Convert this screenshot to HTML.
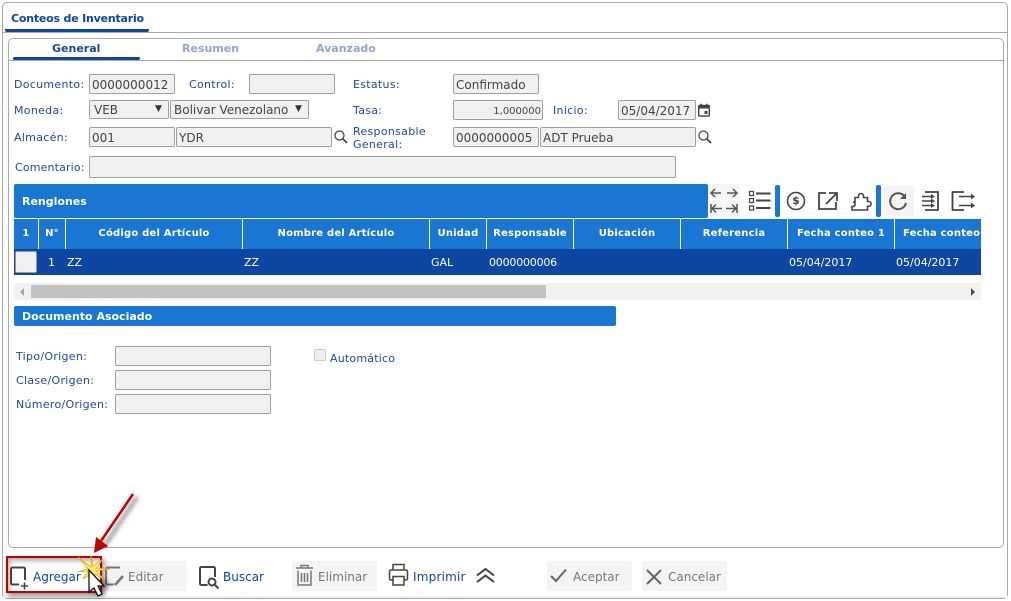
<!DOCTYPE html>
<html><head><meta charset="utf-8"><style>
html,body{margin:0;padding:0;background:#fff}
#p{position:relative;width:1011px;height:601px;overflow:hidden;background:#fff;font-family:"DejaVu Sans",sans-serif;font-size:11px;color:#0d47a1}
#p div{position:absolute;box-sizing:border-box;white-space:nowrap}
.l{line-height:14px;color:#1a4a9c;margin-top:1px;letter-spacing:.3px}
.i{background:#f1f1f1;border:1px solid #a0a0a0;border-radius:2px;font-size:12px;color:#444;line-height:18px;padding-left:2px;padding-top:1px;overflow:hidden}
.b{background:#1976d2;color:#fff;font-weight:bold;font-size:11px}
.h{top:219px;height:30px;line-height:30px;color:#fff;font-weight:bold;font-size:10px;text-align:center;letter-spacing:.2px;overflow:hidden}
.s{top:219px;width:1px;height:30px;background:#fff}
.r{top:250px;height:26px;line-height:26px;color:#fff;font-size:11px}
.g{background:#f4f4f4;border-radius:2px;top:561px;height:30px}
.t{top:570px;line-height:15px;font-size:12px}
.u{color:#777}.v{color:#0d47a1}
svg{position:absolute;overflow:visible}
</style></head><body><div id="p">
<div style="left:2px;top:2px;width:1006px;height:597px;border:1px solid #aaa;border-radius:5px"></div>
<div style="left:3px;top:32px;width:1004px;height:1px;background:#aaa"></div>
<div style="left:5px;top:29px;width:144px;height:3px;background:#0d47a1;border-radius:0 0 2px 2px"></div>
<div style="left:11px;top:12px;font-weight:bold;font-size:11px;line-height:14px;color:#0d47a1;letter-spacing:-.2px">Conteos de Inventario</div>
<div style="left:8px;top:38px;width:996px;height:510px;border:1px solid #aaa;border-radius:5px"></div>
<div style="left:9px;top:60px;width:994px;height:1px;background:#aaa"></div>
<div style="left:13px;top:57px;width:127px;height:3px;background:#0d47a1;border-radius:2px"></div>
<div style="left:52px;top:42px;font-weight:bold;line-height:14px;color:#1a4a8c">General</div>
<div style="left:182px;top:42px;font-weight:bold;line-height:14px;color:#8fa6d2">Resumen</div>
<div style="left:316px;top:42px;font-weight:bold;line-height:14px;color:#8fa6d2">Avanzado</div>

<div class="l" style="left:14px;top:77px">Documento:</div>
<div class="i" style="left:89px;top:74px;width:86px;height:20px">0000000012</div>
<div class="l" style="left:189px;top:77px">Control:</div>
<div class="i" style="left:249px;top:74px;width:86px;height:20px"></div>
<div class="l" style="left:353px;top:77px">Estatus:</div>
<div class="i" style="left:453px;top:74px;width:86px;height:20px">Confirmado</div>

<div class="l" style="left:14px;top:103px">Moneda:</div>
<div class="i" style="left:89px;top:100px;width:80px;height:19px;padding-left:4px;line-height:17px">VEB</div>
<div style="left:155px;top:102px;font-size:9px;line-height:14px;color:#333">▼</div>
<div class="i" style="left:170px;top:100px;width:139px;height:19px;padding-left:3px;line-height:17px">Bolivar Venezolano</div>
<div style="left:295px;top:102px;font-size:9px;line-height:14px;color:#333">▼</div>
<div class="l" style="left:353px;top:103px">Tasa:</div>
<div class="i" style="left:453px;top:100px;width:90px;height:20px;font-size:10px;text-align:right;padding-right:1px;padding-top:2px">1,000000</div>
<div class="l" style="left:553px;top:103px">Inicio:</div>
<div class="i" style="left:618px;top:100px;width:78px;height:20px">05/04/2017</div>
<svg style="left:698px;top:103px" width="12" height="14" viewBox="0 0 12 14"><path d="M1.500 2.500h9a.8.8 0 0 1 .8.8v9a.8.8 0 0 1-.8.8h-9a.8.8 0 0 1-.8-.8v-9a.8.8 0 0 1 .8-.8z" fill="none" stroke="#444" stroke-width="1.400"/><path d="M1 2.500h10v3H1z" fill="#444"/><path d="M3 .8v2M9 .8v2" stroke="#444" stroke-width="1.400"/><rect x="6.500" y="8" width="3" height="3" fill="#444"/></svg>

<div class="l" style="left:14px;top:130px">Almacén:</div>
<div class="i" style="left:89px;top:127px;width:86px;height:20px">001</div>
<div class="i" style="left:176px;top:127px;width:156px;height:20px">YDR</div>
<svg style="left:334px;top:130px" width="14" height="14" viewBox="0 0 14 14"><circle cx="5.500" cy="5.500" r="4.500" fill="none" stroke="#444" stroke-width="1.300"/><path d="M9 9l4 4" stroke="#444" stroke-width="1.800"/></svg>
<div class="l" style="left:353px;top:124px;line-height:13px">Responsable<br>General:</div>
<div class="i" style="left:453px;top:127px;width:86px;height:20px">0000000005</div>
<div class="i" style="left:540px;top:127px;width:156px;height:20px">ADT Prueba</div>
<svg style="left:698px;top:130px" width="14" height="14" viewBox="0 0 14 14"><circle cx="5.500" cy="5.500" r="4.500" fill="none" stroke="#444" stroke-width="1.300"/><path d="M9 9l4 4" stroke="#444" stroke-width="1.800"/></svg>

<div class="l" style="left:15px;top:160px;letter-spacing:.15px">Comentario:</div>
<div class="i" style="left:89px;top:156px;width:587px;height:22px"></div>

<div class="b" style="left:14px;top:184px;width:694px;height:34px;line-height:35px;padding-left:8px;border-radius:2px">Renglones</div>

<div style="left:709px;top:184px;width:31px;height:33px;background:#f6f6f6;border-radius:2px"></div>
<svg style="left:709px;top:184px" width="272" height="34" viewBox="0 0 272 34" fill="none" stroke="#555" stroke-width="1.500">
<path d="M2 9h10M6 5l-4 4 4 4M18 9h10M24 5l4 4-4 4M2 20v9M3 24.500h10M7 20.500l-4 4 4 4M28 20v9M27 24.500H17M23 20.500l4 4-4 4"/>
<path stroke="#444" stroke-width="2" d="M47 9.500h14.500M47 16.500h14.500M47 24h14.500"/>
<path stroke="#444" stroke-width="1.200" d="M40.500 7.500h4v4h-4zM40.500 14.500h4v4h-4zM40.500 22h4v4h-4z"/>
<circle cx="87" cy="17" r="8.500" stroke="#444" stroke-width="1.600"/>
<path stroke="#444" stroke-width="1.800" d="M117 9h-7v16h17v-7M120 9h8v8M128 9l-11 11"/>
<path stroke="#444" stroke-width="1.600" d="M146 18V13.500h3.500V12a2.500 2.500 0 0 1 5 0v1.500h4V17.500h1.200a2.400 2.400 0 0 1 0 4.800h-1.200V26H143v-3.500h1.200a2.300 2.300 0 0 0 0-4.500z"/>
</svg>
<div style="left:785px;top:192px;width:22px;height:18px;line-height:18px;text-align:center;font-size:11px;font-weight:bold;color:#444">$</div>
<div style="left:775px;top:185px;width:5px;height:32px;background:#1976d2;border-radius:2px"></div>
<div style="left:876px;top:185px;width:5px;height:32px;background:#1976d2;border-radius:2px"></div>
<div style="left:884px;top:186px;width:30px;height:30px;background:#f4f4f4;border-radius:2px"></div>
<svg style="left:884px;top:186px" width="96" height="30" viewBox="0 0 96 30" fill="none" stroke="#555" stroke-width="2">
<path d="M21 11a8 8 0 1 0 1 6"/><path d="M22 7v6h-6z" fill="#555" stroke="none"/>
<g stroke="#444" stroke-width="1.800"><path d="M41 6h13v18H41"/><path d="M38 10.500h10M38 15h10M38 19.500h10" stroke-width="1.500"/>
<path d="M80 6H68.500v18H80" stroke-linejoin="round"/><path d="M75 10.500h13M75 19.500h13" stroke-width="1.500"/></g>
<path d="M47 8l4 2.500-4 2.500zM47 12.500l4 2.500-4 2.500zM47 17l4 2.500-4 2.500zM87 7.500l4 3-4 3zM87 16.500l4 3-4 3z" fill="#444" stroke="none"/>
</svg>

<div style="left:14px;top:219px;width:967px;height:30px;background:#1976d2"></div>
<div class="s" style="left:38px"></div><div class="s" style="left:65px"></div><div class="s" style="left:242px"></div><div class="s" style="left:429px"></div><div class="s" style="left:486px"></div><div class="s" style="left:573px"></div><div class="s" style="left:680px"></div><div class="s" style="left:787px"></div><div class="s" style="left:894px"></div>
<div class="h" style="left:14px;width:24px">1</div>
<div class="h" style="left:39px;width:26px">N°</div>
<div class="h" style="left:66px;width:176px">Código del Artículo</div>
<div class="h" style="left:243px;width:186px">Nombre del Artículo</div>
<div class="h" style="left:430px;width:56px">Unidad</div>
<div class="h" style="left:487px;width:86px">Responsable</div>
<div class="h" style="left:574px;width:106px">Ubicación</div>
<div class="h" style="left:681px;width:106px">Referencia</div>
<div class="h" style="left:788px;width:106px">Fecha conteo 1</div>
<div class="h" style="left:895px;width:86px;text-align:left;padding-left:8px">Fecha conteo 2</div>

<div style="left:14px;top:249px;width:967px;height:26px;background:#0d47a1"></div>
<div style="left:15px;top:251px;width:22px;height:22px;background:#f1f1f1;border:1px solid #999;border-radius:2px"></div>
<div class="r" style="left:48px">1</div><div class="r" style="left:67px">ZZ</div><div class="r" style="left:244px">ZZ</div><div class="r" style="left:431px">GAL</div><div class="r" style="left:489px;letter-spacing:-.2px">0000000006</div><div class="r" style="left:789px">05/04/2017</div><div class="r" style="left:896px">05/04/2017</div>

<div style="left:14px;top:283px;width:967px;height:17px;background:#f1f1f1"></div>
<div style="left:31px;top:285px;width:515px;height:13px;background:#c1c1c1"></div>
<div style="left:20px;top:288px;width:0;height:0;border:4px solid transparent;border-left:0;border-right:4px solid #a3a3a3"></div>
<div style="left:971px;top:288px;width:0;height:0;border:4px solid transparent;border-right:0;border-left:4px solid #505050"></div>

<div class="b" style="left:14px;top:306px;width:602px;height:20px;line-height:21px;padding-left:8px;border-radius:2px">Documento Asociado</div>

<div class="l" style="left:16px;top:349px">Tipo/Origen:</div>
<div class="i" style="left:115px;top:346px;width:156px;height:20px"></div>
<div class="l" style="left:16px;top:373px">Clase/Origen:</div>
<div class="i" style="left:115px;top:370px;width:156px;height:20px"></div>
<div class="l" style="left:16px;top:397px">Número/Origen:</div>
<div class="i" style="left:115px;top:394px;width:156px;height:20px"></div>
<div style="left:314px;top:349px;width:12px;height:12px;background:#eee;border:1px solid #ccc;border-radius:2px"></div>
<div class="l" style="left:330px;top:351px;letter-spacing:.2px">Automático</div>

<div style="left:3px;top:596px;width:1004px;height:2px;background:#f2f2f2"></div>
<div class="g" style="left:105px;width:82px"></div>
<div class="g" style="left:292px;width:85px"></div>
<div class="g" style="left:547px;width:85px"></div>
<div class="g" style="left:642px;width:85px"></div>

<div style="left:6px;top:556px;width:96px;height:37px;border:2px solid #c00000;box-shadow:2px 3px 5px rgba(0,0,0,.45),inset 2px 3px 5px rgba(0,0,0,.3)"></div>

<svg style="left:0;top:550px" width="740" height="50" viewBox="0 0 740 50" fill="none" stroke="#444" stroke-width="2">
<path d="M25 30V19a1.500 1.500 0 0 0-1.500-1.500h-11a1.500 1.500 0 0 0-1.500 1.500v14a1.500 1.500 0 0 0 1.500 1.500H19"/><path d="M21 36h7M24.500 32.500v7" stroke-width="1.500"/>
<g stroke="#777"><path d="M120 17.500h-12.500a1.500 1.500 0 0 0-1.500 1.500v14a1.500 1.500 0 0 0 1.500 1.500H114"/><path d="M115 35l8-9" stroke-width="2.500"/></g>
<path d="M215 27V18.500a1.500 1.500 0 0 0-1.500-1.500h-12a1.500 1.500 0 0 0-1.500 1.500v15a1.500 1.500 0 0 0 1.500 1.500h6"/><circle cx="212" cy="32" r="3.500"/><path d="M215 35l3.500 3.500"/>
<g stroke="#777"><path d="M296 18h17M301 18v-2.500h7V18M298 20.500v14.500h13V20.500M301.500 23v9M304.500 23v9M307.500 23v9" stroke-width="1.500"/></g>
<path d="M393 20v-5.500h11V20M393 30h-2a1.500 1.500 0 0 1-1.500-1.500v-7a1.500 1.500 0 0 1 1.500-1.500h15a1.500 1.500 0 0 1 1.500 1.500v7a1.500 1.500 0 0 1-1.500 1.500h-2M393 26.500h11v8.500h-11z" stroke-width="1.500"/>
<path d="M477 25.500l8.500-6.500 8.500 6.500M477 32l8.500-6.500 8.500 6.500" stroke-width="2"/>
<path d="M551 26l5 5 10-11.500" stroke="#666" stroke-width="2"/>
<path d="M647 20l14 14M661 20l-14 14" stroke="#666" stroke-width="2"/>
</svg>

<div class="t v" style="left:33px">Agregar</div>
<div class="t u" style="left:128px">Editar</div>
<div class="t v" style="left:223px">Buscar</div>
<div class="t u" style="left:318px">Eliminar</div>
<div class="t v" style="left:413px;letter-spacing:.2px">Imprimir</div>
<div class="t u" style="left:573px">Aceptar</div>
<div class="t u" style="left:668px">Cancelar</div>

<svg style="left:0;top:480px" width="140" height="121" viewBox="0 0 140 121">
<defs><filter id="f" x="-50%" y="-50%" width="200%" height="200%"><feGaussianBlur stdDeviation="2"/></filter></defs>
<path d="M137 17L103 68" stroke="#000" stroke-opacity=".4" stroke-width="4" fill="none" filter="url(#f)"/>
<path d="M133 14L101 61" stroke="#c00000" stroke-width="2.500" fill="none"/>
<path d="M94 73l14-7-12-9z" fill="#c00000"/>
<path d="M92 111l6 4 5-2 7-8-6-8z" fill="#000" fill-opacity=".35" filter="url(#f)"/>
<path d="M89 90l-11-13 13 10 0-11 2 10 10-7-7 9 14 1-14 2 9 9-10-6-2 9-2-9-8 5 5-8-10 1 9-3z" fill="#ffec6e" stroke="#e6a817" stroke-width=".8"/>
<path d="M89 90v22l5-4 4 8 4-2-4-8h6z" fill="#fff" stroke="#111" stroke-width="1.300"/>
</svg>
</div></body></html>
